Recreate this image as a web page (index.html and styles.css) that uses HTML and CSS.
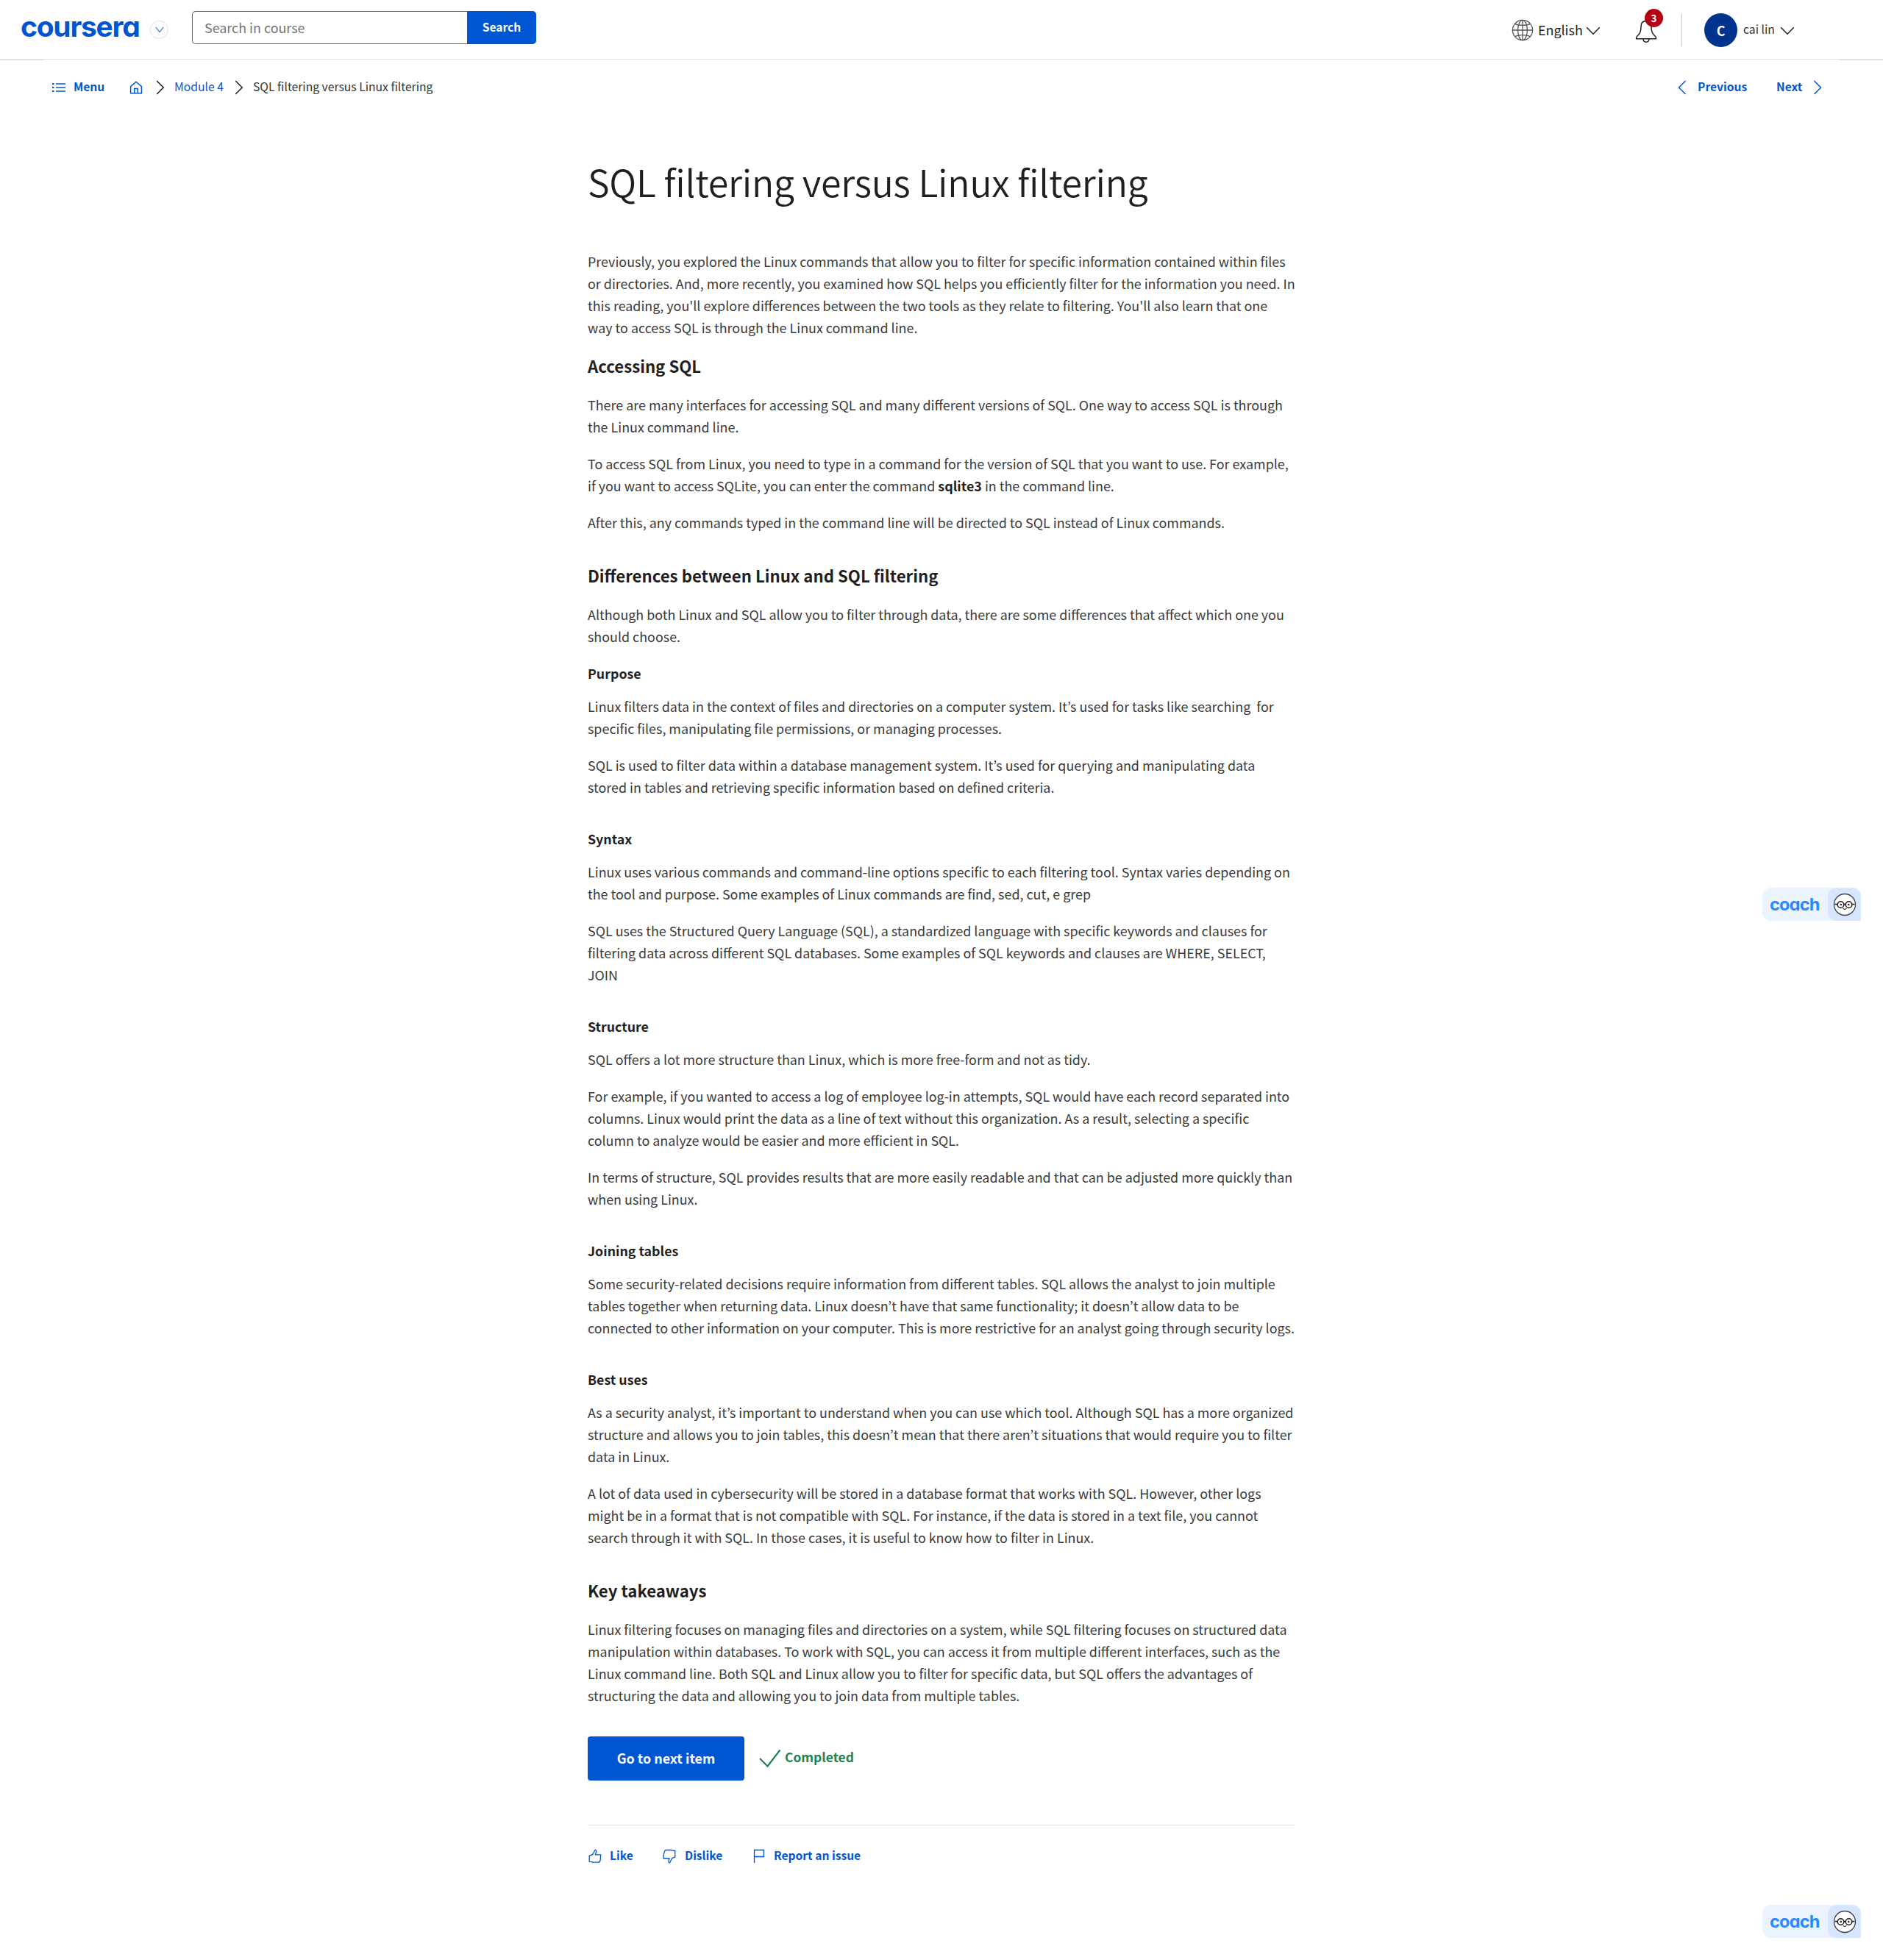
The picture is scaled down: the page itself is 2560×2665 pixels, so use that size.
FILE: index.html
```html
<!DOCTYPE html>
<html lang="en">
<head>
<meta charset="utf-8">
<title>SQL filtering versus Linux filtering | Coursera</title>
<link rel="stylesheet" href="styles.css">
</head>
<body>
<header class="topbar">
  <a class="logo">coursera</a>
  <span class="explore"><svg width="12" height="9" viewBox="0 0 12 9"><path d="M.8 1 6 7.6 11.2 1"/></svg></span>
  <div class="search"><span class="search-field">Search in course</span><span class="search-btn">Search</span></div>
  <div class="account">
    <svg class="globe" width="30" height="30" viewBox="0 0 30 30"><circle cx="15" cy="15" r="13.6"/><ellipse cx="15" cy="15" rx="6.4" ry="13.6"/><path d="M15 1.4v27.2M1.4 15h27.2M4.7 6.4c5 2.6 15.600 2.600 20.600 0M4.700 23.600c5-2.600 15.600-2.600 20.600 0"/></svg>
    <span class="language">English</span>
    <svg class="caret" width="20" height="12" viewBox="0 0 20 12"><path d="m1.200 1.200 8.800 9 8.800-9"/></svg>
    <div class="bell">
      <svg width="30" height="32" viewBox="0 0 30 32"><path d="M15 2.500c-4.500 0-7 3-7 7.500 0 6-1 9-3.500 11.500-1.500 1.500-2.900 2.500-2.900 4v1.300h26.800v-1.300c0-1.500-1.400-2.500-2.900-4C23 19 22 16 22 10c0-4.500-2.500-7.500-7-7.500zM11 27c.2 2.600 1.700 4.200 4 4.200s3.800-1.600 4-4.200"/></svg>
      <span class="count">3</span>
    </div>
    <span class="rule"></span>
    <span class="avatar">C</span>
    <span class="user">cai lin</span>
    <svg class="caret" width="20" height="12" viewBox="0 0 20 12"><path d="m1.200 1.200 8.800 9 8.800-9"/></svg>
  </div>
</header>

<nav class="crumbs">
  <svg class="menu-icon" width="20" height="16" viewBox="0 0 20 16"><path d="M6 3h13M6 8h13M6 13h13"/><path class="dots" d="M1 3h2.500M1 8h2.500M1 13h2.500"/></svg>
  <a class="menu">Menu</a>
  <svg class="home" width="18" height="18" viewBox="0 0 18 18"><path d="M1.600 16.700V7.700L9 1.300l7.400 6.400v9zM6.700 16.500v-6h4.600v6"/></svg>
  <svg class="sep sep-first" width="12" height="20" viewBox="0 0 12 20"><path d="m1.200 1 9 9-9 9"/></svg>
  <a class="module">Module 4</a>
  <svg class="sep" width="12" height="20" viewBox="0 0 12 20"><path d="m1.200 1 9 9-9 9"/></svg>
  <span class="here">SQL filtering versus Linux filtering</span>
  <div class="pager">
    <svg width="12" height="20" viewBox="0 0 12 20"><path d="m10.500 1-9 9 9 9"/></svg>
    <a class="prev">Previous</a>
    <a class="next">Next</a>
    <svg width="12" height="20" viewBox="0 0 12 20"><path d="m1.500 1 9 9-9 9"/></svg>
  </div>
</nav>

<main class="reading">
  <h1>SQL filtering versus Linux filtering</h1>
  <p>Previously, you explored the Linux commands that allow you to filter for specific information contained within files<br>or directories. And, more recently, you examined how SQL helps you efficiently filter for the information you need. In<br>this reading, you'll explore differences between the two tools as they relate to filtering. You'll also learn that one<br>way to access SQL is through the Linux command line.</p>
  <h2 class="tight">Accessing SQL</h2>
  <p>There are many interfaces for accessing SQL and many different versions of SQL. One way to access SQL is through<br>the Linux command line.</p>
  <p>To access SQL from Linux, you need to type in a command for the version of SQL that you want to use. For example,<br>if you want to access SQLite, you can enter the command <strong>sqlite3</strong> in the command line.</p>
  <p>After this, any commands typed in the command line will be directed to SQL instead of Linux commands.</p>
  <h2>Differences between Linux and SQL filtering</h2>
  <p>Although both Linux and SQL allow you to filter through data, there are some differences that affect which one you<br>should choose.</p>
  <h3 class="tight">Purpose</h3>
  <p>Linux filters data in the context of files and directories on a computer system. It’s used for tasks like searching&nbsp; for<br>specific files, manipulating file permissions, or managing processes.</p>
  <p>SQL is used to filter data within a database management system. It’s used for querying and manipulating data<br>stored in tables and retrieving specific information based on defined criteria.</p>
  <h3>Syntax</h3>
  <p>Linux uses various commands and command-line options specific to each filtering tool. Syntax varies depending on<br>the tool and purpose. Some examples of Linux commands are find, sed, cut, e grep</p>
  <p>SQL uses the Structured Query Language (SQL), a standardized language with specific keywords and clauses for<br>filtering data across different SQL databases. Some examples of SQL keywords and clauses are WHERE, SELECT,<br>JOIN</p>
  <h3>Structure</h3>
  <p>SQL offers a lot more structure than Linux, which is more free-form and not as tidy.</p>
  <p>For example, if you wanted to access a log of employee log-in attempts, SQL would have each record separated into<br>columns. Linux would print the data as a line of text without this organization. As a result, selecting a specific<br>column to analyze would be easier and more efficient in SQL.</p>
  <p>In terms of structure, SQL provides results that are more easily readable and that can be adjusted more quickly than<br>when using Linux.</p>
  <h3>Joining tables</h3>
  <p>Some security-related decisions require information from different tables. SQL allows the analyst to join multiple<br>tables together when returning data. Linux doesn’t have that same functionality; it doesn’t allow data to be<br>connected to other information on your computer. This is more restrictive for an analyst going through security logs.</p>
  <h3>Best uses</h3>
  <p>As a security analyst, it’s important to understand when you can use which tool. Although SQL has a more organized<br>structure and allows you to join tables, this doesn’t mean that there aren’t situations that would require you to filter<br>data in Linux.</p>
  <p>A lot of data used in cybersecurity will be stored in a database format that works with SQL. However, other logs<br>might be in a format that is not compatible with SQL. For instance, if the data is stored in a text file, you cannot<br>search through it with SQL. In those cases, it is useful to know how to filter in Linux.</p>
  <h2>Key takeaways</h2>
  <p>Linux filtering focuses on managing files and directories on a system, while SQL filtering focuses on structured data<br>manipulation within databases. To work with SQL, you can access it from multiple different interfaces, such as the<br>Linux command line. Both SQL and Linux allow you to filter for specific data, but SQL offers the advantages of<br>structuring the data and allowing you to join data from multiple tables.</p>
  <div class="progress">
    <a class="go-next">Go to next item</a>
    <svg class="check" width="30" height="26" viewBox="0 0 30 26"><path d="m1 13 10.500 10.500L28.500 1.500"/></svg>
    <span class="done">Completed</span>
  </div>
  <div class="feedback">
    <svg width="18" height="20" viewBox="0 0 18 20"><path d="M1.200 17.200V9.300l4.300-1.600 2.500-4.200c.3-1.500.6-2.100 1.300-2.100 1.200 0 1.600 1.500 1.200 2.900l-1 3.600h7.200l-.5 6.700c-.2 2.400-1 3.600-3.200 3.600H7c-2.300 0-3.600-1-5.800-1z"/></svg>
    <a class="like">Like</a>
    <svg width="18" height="20" viewBox="0 0 18 20"><path d="M1.200 12.200V7.900l1.300-4.500c.4-1.300.9-1.900 2.300-1.900h6.200c2.300 0 3.600 1 5.800 1v8.500l-3.800 1.400-2.500 4.400c-.3 1.500-.7 2.100-1.400 2.100-1.100 0-1.300-1.300-1-2.700l.8-3.200H1.200z"/></svg>
    <a class="dislike">Dislike</a>
    <svg width="16" height="20" viewBox="0 0 16 20"><path d="M1.500 19V1.500h13v9h-13"/></svg>
    <a class="report">Report an issue</a>
  </div>
</main>

<aside class="coach coach-mid"><span class="coach-name">coach</span><span class="coach-face"><svg width="32" height="32" viewBox="0 0 32 32"><circle class="head" cx="16" cy="16" r="14.500"/><g class="specs"><circle cx="10.500" cy="16" r="4.300"/><circle cx="21.500" cy="16" r="4.300"/><path d="M14.500 15.500h3M2.500 15.500h3.500M26 15.500h3.500"/></g><circle class="eye" cx="10.800" cy="16" r="1.300"/><circle class="eye" cx="21.200" cy="16" r="1.300"/><path class="smile" d="M13.700 21.200c1.200 1.600 3.400 1.600 4.600 0"/></svg></span></aside>
<aside class="coach coach-end"><span class="coach-name">coach</span><span class="coach-face"><svg width="32" height="32" viewBox="0 0 32 32"><circle class="head" cx="16" cy="16" r="14.500"/><g class="specs"><circle cx="10.500" cy="16" r="4.300"/><circle cx="21.500" cy="16" r="4.300"/><path d="M14.500 15.500h3M2.500 15.500h3.500M26 15.500h3.500"/></g><circle class="eye" cx="10.800" cy="16" r="1.300"/><circle class="eye" cx="21.200" cy="16" r="1.300"/><path class="smile" d="M13.700 21.200c1.200 1.600 3.400 1.600 4.600 0"/></svg></span></aside>
</body>
</html>
```
FILE: styles.css
```css
* { box-sizing: border-box; }

body {
  position: relative;
  width: 2560px;
  height: 2665px;
  margin: 0;
  overflow: hidden;
  background: #fff;
  color: #1f1f1f;
  font-family: "Noto Sans CJK KR", "Open Sans", sans-serif;
  font-size: 17.9px;
  line-height: 30px;
  white-space: nowrap;
}

svg { display: block; flex: none; fill: none; stroke: #1f1f1f; stroke-width: 1.5; overflow: visible; }
a, span { flex: none; }

/* Top bar */
.topbar {
  display: flex;
  align-items: flex-start;
  height: 81px;
  padding-left: 28px;
  border-bottom: 1px solid #e1e1e1;
}
.logo {
  width: 176px;
  padding-top: 19px;
  color: #0056d2;
  font: 700 39px/34px Inter, sans-serif;
  font-feature-settings: "cv11";
  letter-spacing: -1.25px;
}
.explore {
  display: flex;
  align-items: center;
  justify-content: center;
  width: 25px;
  height: 25px;
  margin-top: 28px;
  border: 1px solid #e1e1e1;
  border-radius: 50%;
}
.explore svg { stroke: #2a73dc; stroke-width: 1.2; }
.search { display: flex; margin: 15px 0 0 32px; height: 45px; }
.search-field {
  width: 374px;
  padding: 6px 0 0 16px;
  border: 1px solid #636363;
  border-right: 0;
  border-radius: 5px 0 0 5px;
  color: #757575;
}
.search-btn {
  width: 94px;
  padding-top: 6px;
  border-radius: 0 5px 5px 0;
  background: #0056d2;
  color: #fff;
  font-size: 15.6px;
  font-weight: 700;
  text-align: center;
}
.account { display: flex; margin-left: 1326px; }
.globe { margin-top: 26px; stroke: #555; stroke-width: 1.3; }
.language { width: 65px; margin: 25px 0 0 6px; }
.caret { margin-top: 36px; stroke-width: 1.5; }
.bell { position: relative; margin: 26px 0 0 47px; }
.count {
  position: absolute;
  left: 13px;
  top: -14px;
  width: 25px;
  height: 25px;
  border-radius: 50%;
  background: #b30013;
  color: #fff;
  font-size: 13.5px;
  font-weight: 700;
  line-height: 25px;
  text-align: center;
}
.rule { width: 2px; height: 45px; margin: 18px 0 0 32px; background: #e1e1e1; }
.avatar {
  width: 45px;
  height: 46px;
  margin: 18px 0 0 30px;
  border-radius: 50%;
  background: #00338d;
  color: #fff;
  font-size: 17.9px;
  font-weight: 700;
  line-height: 46px;
  text-align: center;
}
.user { width: 50px; margin: 25px 0 0 8px; color: #333; font-size: 15.7px; }

/* Breadcrumbs; the header rule is one pixel thicker at both page edges */
.crumbs {
  display: flex;
  align-items: center;
  height: 76px;
  padding-left: 70px;
  background:
    linear-gradient(#e1e1e1, #e1e1e1) left top / 60px 1px no-repeat,
    linear-gradient(#e1e1e1, #e1e1e1) right top / 60px 1px no-repeat;
  font-size: 15.7px;
  line-height: 28px;
  color: #333;
}
.crumbs a, .here { padding-bottom: 2px; }
.crumbs a { color: #0056d2; }
.crumbs .menu, .pager a { padding-bottom: 4px; font-weight: 700; font-size: 15.6px; }
.menu-icon { stroke: #0056d2; }
.menu-icon .dots { stroke-width: 2; }
.menu { width: 76px; margin-left: 10px; }
.home { stroke: #0056d2; }
.sep { stroke-width: 1.5; }
.sep-first { margin-left: 18px; }
.module { width: 82px; margin-left: 13px; }
.here { width: 244px; margin-left: 13px; }
.pager { display: flex; align-items: center; margin-left: 1693px; }
.pager svg { stroke: #0056d2; }
.prev { width: 107px; margin-left: 15px; }
.next { width: 50px; }

/* Reading */
.reading { width: 962px; margin: 59px 0 0 799px; }
.reading > * { margin: 0; }
h1 { height: 124px; font-size: 50px; font-weight: 350; line-height: 60px; letter-spacing: -.2px; font-variant-ligatures: common-ligatures; }
.reading p { color: #3a3a3a; }
.reading p + p { margin-top: 20px; }
strong { color: #1f1f1f; }
h2 { font-size: 22.2px; font-weight: 700; }
.reading h2 { margin: 42px 0 23px; }
.reading h2.tight { margin-top: 22px; }
h3 { font-size: 17.8px; font-weight: 700; }
.reading h3 { margin: 40px 0 15px; }
.reading h3.tight { margin-top: 20px; }

.progress { display: flex; }
.reading .progress { margin-top: 41px; }
.go-next {
  width: 213px;
  height: 60px;
  border-radius: 4px;
  background: #0056d2;
  color: #fff;
  font-weight: 700;
  line-height: 59px;
  text-align: center;
}
.check { margin: 17px 0 0 20px; stroke: #1f8354; stroke-width: 2.2; }
.done { margin: 13px 0 0 5px; color: #1f8354; font-size: 17.4px; font-weight: 700; }
.feedback { display: flex; align-items: center; height: 86px; border-top: 1px solid #e1e1e1; color: #0056d2; font-size: 15.6px; font-weight: 700; }
.feedback a { padding-bottom: 5px; }
.reading .feedback { margin-top: 60px; }
.feedback svg { margin: 0 0 2px 1px; stroke: #0056d2; stroke-width: 1.3; }
.like { width: 71px; margin-left: 11px; }
.dislike { width: 92px; margin-left: 12px; }
.report { margin-left: 12px; }

/* Floating coach launcher */
.coach {
  position: absolute;
  left: 2396px;
  display: flex;
  width: 134px;
  height: 45px;
  border-radius: 12px 12px 2px 12px;
  background: #ebf3ff;
}
.coach-mid { top: 1207px; }
.coach-end { top: 2590px; }
.coach-name {
  width: 89px;
  padding-left: 10px;
  color: #2d87ff;
  font: 700 23.5px/45px Inter, sans-serif;
  font-feature-settings: "cv11";
  letter-spacing: -.8px;
}
.coach-face { display: flex; align-items: center; justify-content: center; width: 45px; border-radius: 12px 12px 2px 12px; background: #d6e6ff; }
.head { fill: #fff; stroke: #3b4152; stroke-width: 1.3; }
.specs { stroke: #222; stroke-width: 1.6; }
.eye { fill: #222; stroke: none; }
.smile { stroke: #333; stroke-width: 1.1; }
```
